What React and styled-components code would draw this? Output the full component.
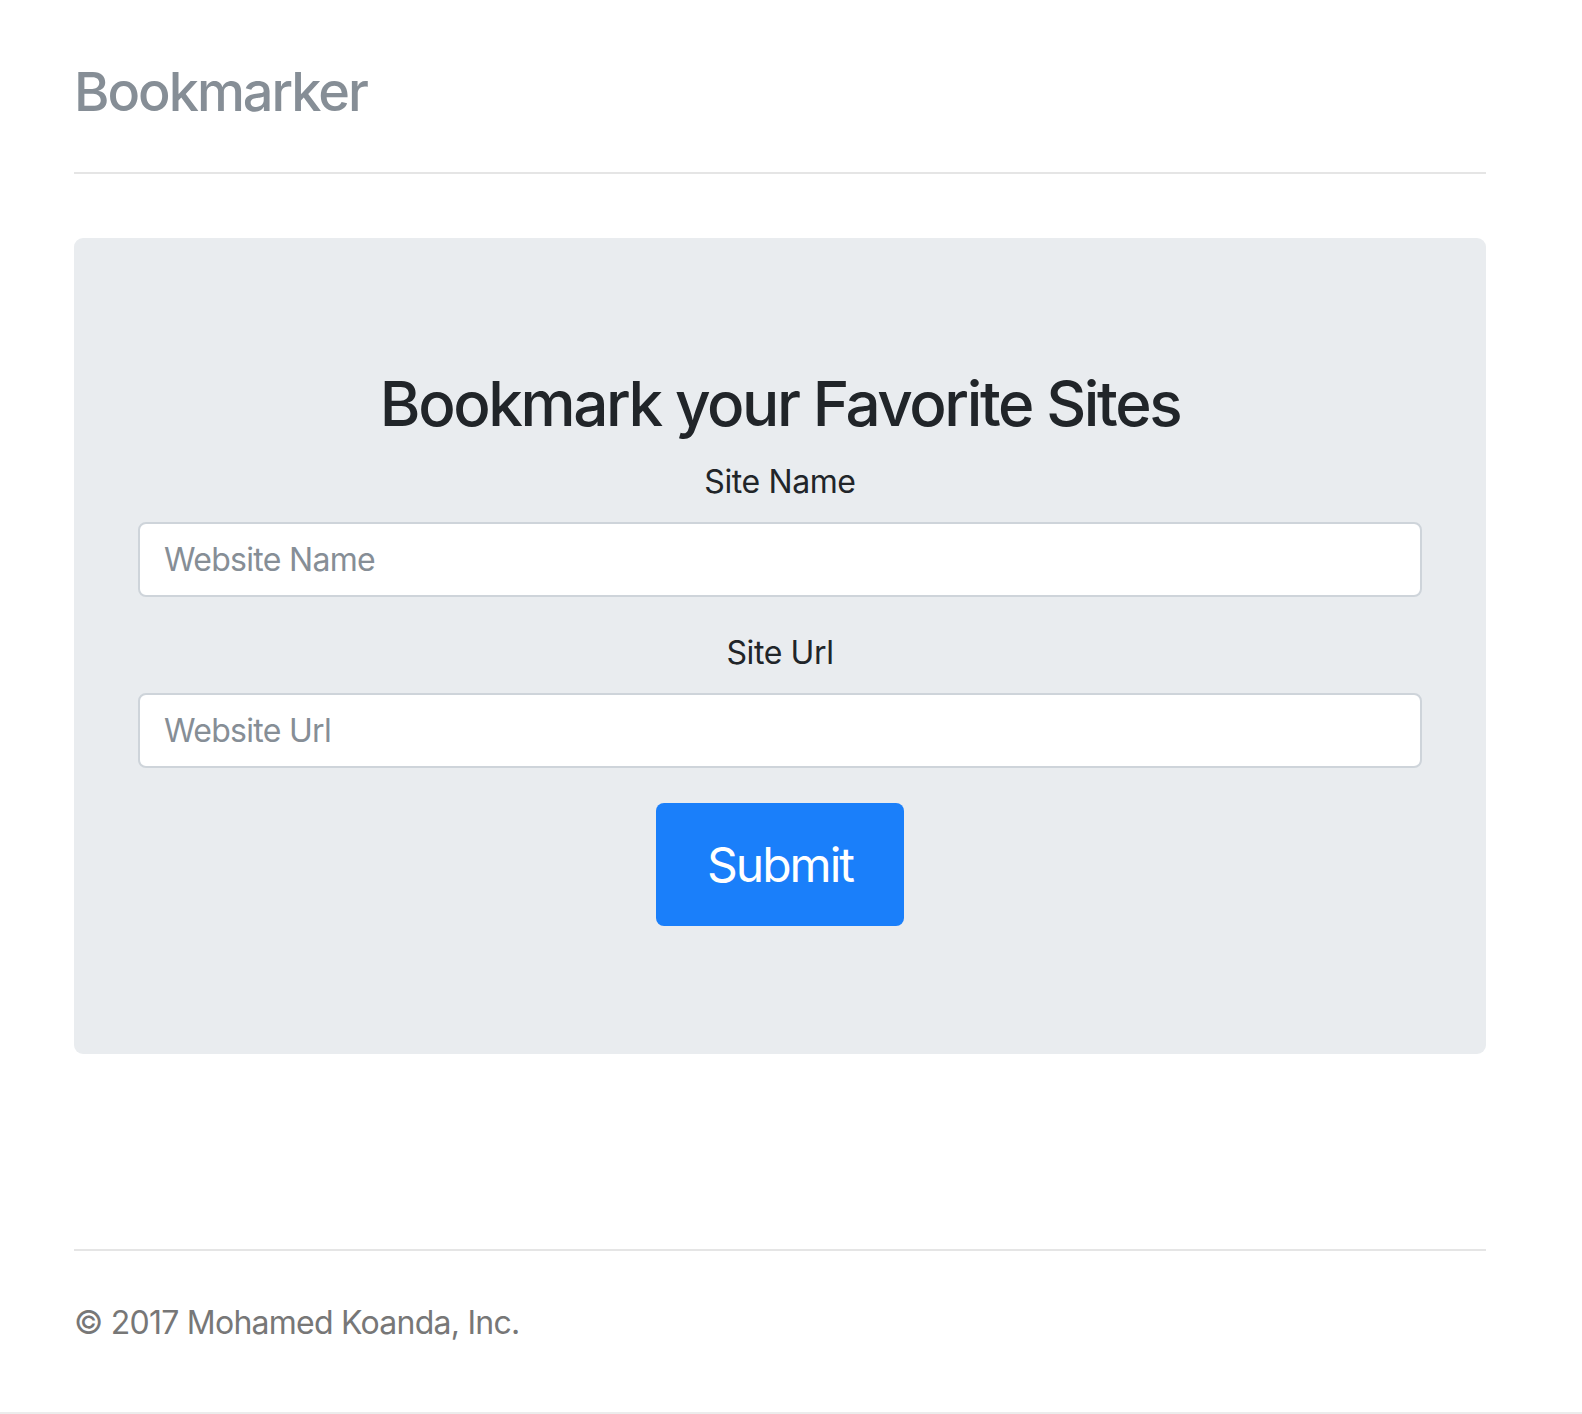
import React, {useState} from 'react'
import styled, {createGlobalStyle} from 'styled-components'

const GlobalStyle = createGlobalStyle`
  html, body {
    margin: 0;
    padding: 0;
    background: #fff;
  }
  body {
    font-family: Inter, "Liberation Sans", sans-serif;
    color: #212529;
    -webkit-font-smoothing: antialiased;
  }
  * {
    box-sizing: border-box;
  }
`

const Page = styled.div`
  min-height: 1414px;
  padding: 0 96px 0 74px;
  border-bottom: 2px solid #ececec;
`

const Header = styled.header`
  padding-top: 44px;
  padding-bottom: 32px;
  border-bottom: 2px solid #e5e5e5;
`

const Brand = styled.h3`
  margin: 0;
  font-size: 54px;
  font-weight: 500;
  line-height: 96px;
  letter-spacing: -2px;
  color: #868e96;
`

const Jumbotron = styled.div`
  margin-top: 64px;
  padding: 128px 64px;
  background: #e9ecef;
  border-radius: 9px;
  text-align: center;
`

const Title = styled.h1`
  margin: 0 0 16px;
  font-size: 62px;
  font-weight: 500;
  line-height: 76px;
  letter-spacing: -2.4px;
  color: #212529;
`

const Form = styled.form`
  display: flex;
  flex-direction: column;
  align-items: center;
`

const FormGroup = styled.div`
  width: 100%;
  margin-bottom: 32px;
  &:last-of-type {
    margin-bottom: 35px;
  }
`

const Label = styled.label`
  display: block;
  margin-bottom: 16px;
  font-size: 32px;
  line-height: 48px;
  color: #212529;
  letter-spacing: -0.4px;
`

const Input = styled.input`
  display: block;
  width: 100%;
  height: 75px;
  padding: 12px 24px;
  font-family: inherit;
  font-size: 32px;
  line-height: 48px;
  color: #495057;
  background: #fff;
  border: 2px solid #ced4da;
  border-radius: 8px;
  letter-spacing: -0.7px;
  &::placeholder {
    color: #868e96;
  }
  &:focus {
    outline: none;
    border-color: #80bdff;
  }
`

const SubmitButton = styled.button`
  width: 248px;
  height: 123px;
  padding: 0;
  font-family: inherit;
  font-size: 48px;
  font-weight: 400;
  letter-spacing: -2px;
  color: #fff;
  background: #1a7ffa;
  border: none;
  border-radius: 8px;
  cursor: pointer;
`

const Footer = styled.footer`
  margin-top: 195px;
  padding-top: 48px;
  border-top: 2px solid #e5e5e5;
  color: #777;
`

const Copyright = styled.p`
  margin: 0;
  font-size: 32px;
  line-height: 48px;
  letter-spacing: -0.75px;
`

function App() {
  const [siteName, setSiteName] = useState('')
  const [siteUrl, setSiteUrl] = useState('')

  const handleSubmit = e => {
    e.preventDefault()
  }

  return (
    <Page>
      <GlobalStyle />
      <Header>
        <Brand>Bookmarker</Brand>
      </Header>
      <Jumbotron>
        <Title>Bookmark your Favorite Sites</Title>
        <Form onSubmit={handleSubmit}>
          <FormGroup>
            <Label htmlFor="siteName">Site Name</Label>
            <Input
              id="siteName"
              type="text"
              placeholder="Website Name"
              value={siteName}
              onChange={e => setSiteName(e.target.value)}
            />
          </FormGroup>
          <FormGroup>
            <Label htmlFor="siteUrl">Site Url</Label>
            <Input
              id="siteUrl"
              type="text"
              placeholder="Website Url"
              value={siteUrl}
              onChange={e => setSiteUrl(e.target.value)}
            />
          </FormGroup>
          <SubmitButton type="submit">Submit</SubmitButton>
        </Form>
      </Jumbotron>
      <Footer>
        <Copyright>&copy; 2017 Mohamed Koanda, Inc.</Copyright>
      </Footer>
    </Page>
  )
}

export default App
